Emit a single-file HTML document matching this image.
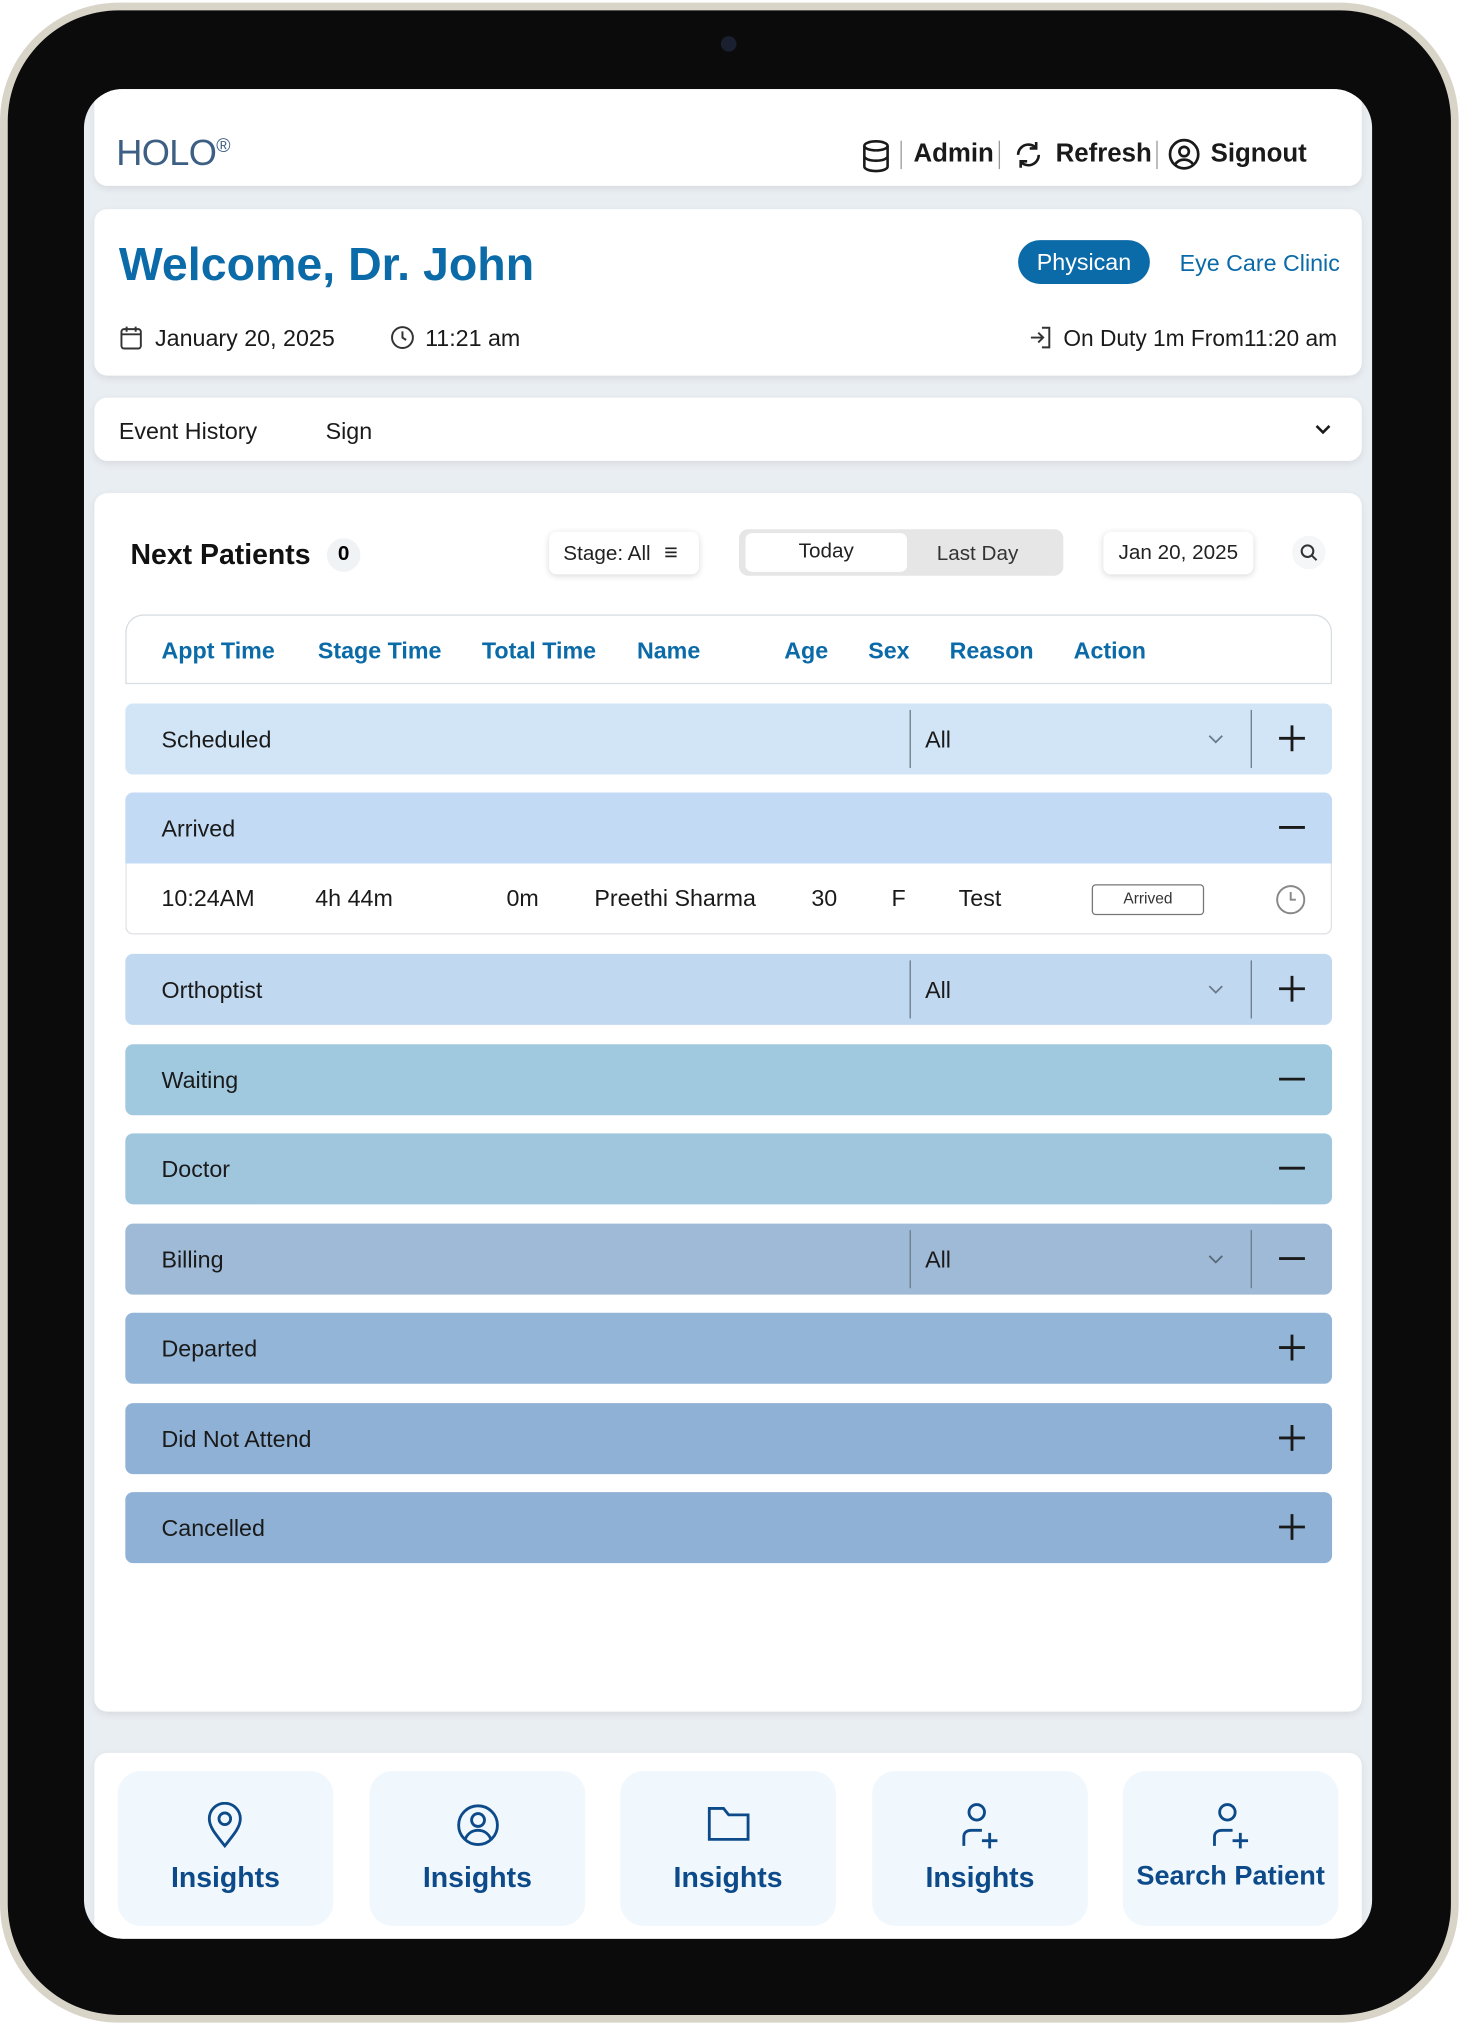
<!DOCTYPE html>
<html><head><meta charset="utf-8">
<style>
*{box-sizing:border-box;margin:0;padding:0}
html,body{width:1460px;height:2024px;overflow:hidden;background:#fff;font-family:"Liberation Sans",sans-serif;}
#w{position:absolute;left:0;top:0;width:1130px;height:1568px;transform:scale(1.2920,1.2908);transform-origin:0 0;}
.abs{position:absolute}
.frame{left:0;top:2px;width:1129px;height:1565px;border-radius:92px;background:#d9d4c8;}
.bezel{left:6px;top:8px;width:1117px;height:1553px;border-radius:86px;background:#0b0b0b;}
.screen{left:65px;top:69px;width:997px;height:1433px;border-radius:30px;background:#e9eef2;overflow:hidden}
.card{position:absolute;background:#fff;border-radius:10px;box-shadow:0 2px 6px rgba(0,0,0,.08)}
.t18{font-size:18px;color:#1a1a1a}
.blue{color:#0b6aa8}
.row{position:absolute;left:31px;width:934px;height:55px;border-radius:6px;font-size:18px;color:#1a1a1a}
.row .l{position:absolute;left:28px;top:18px}
.row .sep{position:absolute;top:5px;bottom:5px;width:1px;background:#6b7a88}
.pm{position:absolute;left:892px;top:16px;width:22px;height:22px}
.tile{position:absolute;top:14px;width:167px;height:120px;border-radius:18px;background:#f1f8fd;text-align:center;color:#0d4a8a;font-size:22px;font-weight:bold}
.tile svg{position:absolute;left:67px;top:24px}
.tile span{position:absolute;left:0;right:0;top:70px}
.hd{position:absolute;top:17px;font-size:18px;font-weight:bold;color:#0b6aa8}
.dc{position:absolute;top:17px;font-size:18px;color:#1a1a1a}
</style></head><body><div id="w">
<div class="abs frame"></div>
<div class="abs bezel"></div>
<div class="abs" style="left:558px;top:28px;width:12px;height:12px;border-radius:50%;background:#1a2030"></div>
<div class="abs screen">
 <div class="card" style="left:8px;top:-10px;width:981px;height:85px;">
  <div class="abs" style="left:17px;top:44px;font-size:28px;color:#3d5f84;letter-spacing:-0.5px">HOLO<sup style="font-size:15px">®</sup></div>
  <svg class="abs" style="left:594px;top:49px" width="22" height="26" viewBox="0 0 22 26" fill="none" stroke="#1a1a1a" stroke-width="2"><ellipse cx="11" cy="5" rx="9" ry="3.5"/><path d="M2 5v16c0 2 4 3.5 9 3.5s9-1.5 9-3.5V5M2 13c0 2 4 3.5 9 3.5s9-1.5 9-3.5"/></svg>
  <div class="abs" style="left:624px;top:50px;width:1px;height:22px;background:#999"></div>
  <div class="abs" style="left:634px;top:49px;font-size:20px;font-weight:bold;color:#1a1a1a">Admin</div>
  <div class="abs" style="left:700px;top:50px;width:1px;height:22px;background:#999"></div>
  <svg class="abs" style="left:711px;top:49px" width="24" height="24" viewBox="0 0 24 24" fill="none" stroke="#1a1a1a" stroke-width="2"><path d="M20 12a8 8 0 0 1-14 5.3M4 12a8 8 0 0 1 14-5.3M18 2v5h-5M6 22v-5h5"/></svg>
  <div class="abs" style="left:744px;top:49px;font-size:20px;font-weight:bold;color:#1a1a1a">Refresh</div>
  <div class="abs" style="left:822px;top:50px;width:1px;height:22px;background:#999"></div>
  <svg class="abs" style="left:831px;top:48px" width="25" height="25" viewBox="0 0 24 24" fill="none" stroke="#1a1a1a" stroke-width="2"><circle cx="12" cy="12" r="10.5"/><circle cx="12" cy="10" r="3.5"/><path d="M5.5 19.5c1.5-2.5 4-3.5 6.5-3.5s5 1 6.5 3.5"/></svg>
  <div class="abs" style="left:864px;top:49px;font-size:20px;font-weight:bold;color:#1a1a1a">Signout</div>
 </div>
 <div class="card" style="left:8px;top:93px;width:981px;height:129px;">
  <div class="abs blue" style="left:19px;top:22px;font-size:36px;font-weight:bold">Welcome, Dr. John</div>
  <div class="abs" style="left:715px;top:24px;width:102px;height:34px;border-radius:17px;background:#0b6aa8;color:#fff;font-size:18px;text-align:center;line-height:34px">Physican</div>
  <div class="abs blue" style="left:840px;top:32px;font-size:18px">Eye Care Clinic</div>
  <svg class="abs" style="left:20px;top:90px" width="17" height="19" viewBox="0 0 17 19" fill="none" stroke="#333" stroke-width="1.5"><rect x="1" y="3" width="15" height="15" rx="2"/><path d="M1 7h15M5 1v4M12 1v4"/></svg>
  <div class="abs t18" style="left:47px;top:90px">January 20, 2025</div>
  <svg class="abs" style="left:229px;top:90px" width="19" height="19" viewBox="0 0 20 20" fill="none" stroke="#333" stroke-width="1.6"><circle cx="10" cy="10" r="8.5"/><path d="M10 5v5l3 2"/></svg>
  <div class="abs t18" style="left:256px;top:90px">11:21 am</div>
  <svg class="abs" style="left:723px;top:90px" width="19" height="19" viewBox="0 0 20 20" fill="none" stroke="#333" stroke-width="1.6"><path d="M11 2h6v16h-6M2 10h10M8 6l4 4-4 4"/></svg>
  <div class="abs t18" style="left:750px;top:90px;font-size:17.6px">On Duty 1m From11:20 am</div>
 </div>
 <div class="card" style="left:8px;top:239px;width:981px;height:49px;">
  <div class="abs t18" style="left:19px;top:16px">Event History</div>
  <div class="abs t18" style="left:179px;top:16px">Sign</div>
  <svg class="abs" style="left:944px;top:20px" width="14" height="10" viewBox="0 0 14 10" fill="none" stroke="#1a1a1a" stroke-width="2"><path d="M2 2l5 5 5-5"/></svg>
 </div>
 <div class="card" style="left:8px;top:313px;width:981px;height:944px;">
  <div class="abs" style="left:28px;top:35px;font-size:22px;font-weight:bold;color:#111">Next Patients</div>
  <div class="abs" style="left:180px;top:35px;width:26px;height:26px;border-radius:50%;background:#f0f3f6;font-size:16px;font-weight:bold;text-align:center;line-height:26px">0</div>
  <div class="abs" style="left:352px;top:30px;width:116px;height:33px;border-radius:6px;background:#fff;box-shadow:0 1px 5px rgba(0,0,0,.15);font-size:16px;color:#222;line-height:33px;padding-left:11px">Stage: All <span style="font-size:18px;margin-left:6px">≡</span></div>
  <div class="abs" style="left:499px;top:28px;width:251px;height:36px;border-radius:7px;background:#e6e6e6"></div>
  <div class="abs" style="left:504px;top:31px;width:125px;height:30px;border-radius:5px;background:#fff;font-size:16px;color:#222;text-align:center;line-height:30px">Today</div>
  <div class="abs" style="left:652px;top:39px;font-size:16px;color:#333">Last Day</div>
  <div class="abs" style="left:781px;top:30px;width:116px;height:33px;border-radius:6px;background:#fff;box-shadow:0 1px 5px rgba(0,0,0,.15);font-size:16px;color:#222;line-height:33px;text-align:center">Jan 20, 2025</div>
  <div class="abs" style="left:927px;top:33px;width:26px;height:26px;border-radius:50%;background:#f4f6f8"></div>
  <svg class="abs" style="left:933px;top:39px" width="14" height="14" viewBox="0 0 14 14" fill="none" stroke="#333" stroke-width="1.6"><circle cx="6" cy="6" r="4.5"/><path d="M9.5 9.5l3.5 3.5"/></svg>
  <div class="abs" style="left:24px;top:94px;width:934px;height:54px;border:1px solid #d8dde2;border-radius:14px 14px 0 0">
   <div class="hd" style="left:27px">Appt Time</div>
   <div class="hd" style="left:148px">Stage Time</div>
   <div class="hd" style="left:275px">Total Time</div>
   <div class="hd" style="left:395px">Name</div>
   <div class="hd" style="left:509px">Age</div>
   <div class="hd" style="left:574px">Sex</div>
   <div class="hd" style="left:637px">Reason</div>
   <div class="hd" style="left:733px">Action</div>
  </div>
 </div>
 <div style="position:absolute;left:-8px;top:0;">
 <div class="row" style="left:40px;top:476px;background:#d1e5f7"><div class="l">Scheduled</div><div class="sep" style="left:607px"></div><div class="l" style="left:619px">All</div><svg class="abs" style="left:838px;top:24px" width="12" height="8" viewBox="0 0 12 8" fill="none" stroke="#6b7a88" stroke-width="1.4"><path d="M1 1l5 5 5-5"/></svg><div class="sep" style="left:871px"></div><svg class="pm" viewBox="0 0 22 22" stroke="#1a1a1a" stroke-width="2.2"><path d="M11 1v20M1 11h20"/></svg></div>
 <div class="row" style="left:40px;top:545px;background:#c2daf3;border-radius:6px 6px 0 0"><div class="l">Arrived</div><svg class="pm" viewBox="0 0 22 22" stroke="#1a1a1a" stroke-width="2.2"><path d="M1 11h20"/></svg></div>
 <div class="row" style="left:40px;top:600px;height:55px;background:#fff;border:1px solid #dde1e5;border-top:none;border-radius:0 0 6px 6px">
  <div class="dc" style="left:27px">10:24AM</div><div class="dc" style="left:146px">4h 44m</div><div class="dc" style="left:294px">0m</div><div class="dc" style="left:362px">Preethi Sharma</div><div class="dc" style="left:530px">30</div><div class="dc" style="left:592px">F</div><div class="dc" style="left:644px">Test</div>
  <div class="abs" style="left:747px;top:16px;width:87px;height:24px;border:1.5px solid #777;border-radius:3px;font-size:12px;color:#333;text-align:center;line-height:21px">Arrived</div>
  <svg class="abs" style="left:889px;top:16px" width="24" height="24" viewBox="0 0 24 24" fill="none" stroke="#888" stroke-width="1.5"><circle cx="12" cy="12" r="10.5"/><path d="M12 6v6h4"/></svg>
 </div>
 <div class="row" style="left:40px;top:670px;background:#c0d8f0"><div class="l">Orthoptist</div><div class="sep" style="left:607px"></div><div class="l" style="left:619px">All</div><svg class="abs" style="left:838px;top:24px" width="12" height="8" viewBox="0 0 12 8" fill="none" stroke="#6b7a88" stroke-width="1.4"><path d="M1 1l5 5 5-5"/></svg><div class="sep" style="left:871px"></div><svg class="pm" viewBox="0 0 22 22" stroke="#1a1a1a" stroke-width="2.2"><path d="M11 1v20M1 11h20"/></svg></div>
 <div class="row" style="left:40px;top:740px;background:#a0c8de"><div class="l">Waiting</div><svg class="pm" viewBox="0 0 22 22" stroke="#1a1a1a" stroke-width="2.2"><path d="M1 11h20"/></svg></div>
 <div class="row" style="left:40px;top:809px;background:#a0c6de"><div class="l">Doctor</div><svg class="pm" viewBox="0 0 22 22" stroke="#1a1a1a" stroke-width="2.2"><path d="M1 11h20"/></svg></div>
 <div class="row" style="left:40px;top:879px;background:#9ebad6"><div class="l">Billing</div><div class="sep" style="left:607px"></div><div class="l" style="left:619px">All</div><svg class="abs" style="left:838px;top:24px" width="12" height="8" viewBox="0 0 12 8" fill="none" stroke="#5b6a78" stroke-width="1.4"><path d="M1 1l5 5 5-5"/></svg><div class="sep" style="left:871px"></div><svg class="pm" viewBox="0 0 22 22" stroke="#1a1a1a" stroke-width="2.2"><path d="M1 11h20"/></svg></div>
 <div class="row" style="left:40px;top:948px;background:#93b5d8"><div class="l">Departed</div><svg class="pm" viewBox="0 0 22 22" stroke="#1a1a1a" stroke-width="2.2"><path d="M11 1v20M1 11h20"/></svg></div>
 <div class="row" style="left:40px;top:1018px;background:#8fb1d6"><div class="l">Did Not Attend</div><svg class="pm" viewBox="0 0 22 22" stroke="#1a1a1a" stroke-width="2.2"><path d="M11 1v20M1 11h20"/></svg></div>
 <div class="row" style="left:40px;top:1087px;background:#8fb1d6"><div class="l">Cancelled</div><svg class="pm" viewBox="0 0 22 22" stroke="#1a1a1a" stroke-width="2.2"><path d="M11 1v20M1 11h20"/></svg></div>
 </div>
 <div class="card" style="left:8px;top:1289px;width:981px;height:160px;border-radius:10px">
  <div class="tile" style="left:18px"><svg width="32" height="36" viewBox="0 0 32 36" fill="none" stroke="#0d4a8a" stroke-width="2.2"><path d="M16 34C8 24 4 19 4 13a12 12 0 0 1 24 0c0 6-4 11-12 21z"/><circle cx="16" cy="13" r="4.5"/></svg><span>Insights</span></div>
  <div class="tile" style="left:213px"><svg width="34" height="36" viewBox="0 0 34 36" fill="none" stroke="#0d4a8a" stroke-width="2.2"><circle cx="17" cy="18" r="15"/><circle cx="17" cy="14" r="5"/><path d="M7 29c2-5 6-7 10-7s8 2 10 7"/></svg><span>Insights</span></div>
  <div class="tile" style="left:407px"><svg width="34" height="34" viewBox="0 0 34 34" fill="none" stroke="#0d4a8a" stroke-width="2.2"><path d="M2 5h11l4 5h15v19H2z"/></svg><span>Insights</span></div>
  <div class="tile" style="left:602px"><svg width="34" height="38" viewBox="0 0 34 38" fill="none" stroke="#0d4a8a" stroke-width="2.2"><circle cx="14" cy="8" r="6"/><path d="M4 34v-7c0-3 2-5 6-5h8M24 24v12M18 30h12"/></svg><span>Insights</span></div>
  <div class="tile" style="left:796px"><svg width="34" height="38" viewBox="0 0 34 38" fill="none" stroke="#0d4a8a" stroke-width="2.2"><circle cx="14" cy="8" r="6"/><path d="M4 34v-7c0-3 2-5 6-5h8M24 24v12M18 30h12"/></svg><span style="font-size:21px">Search Patient</span></div>
 </div>
</div>
</div></body></html>
